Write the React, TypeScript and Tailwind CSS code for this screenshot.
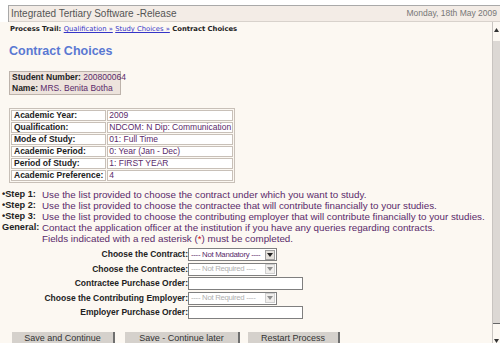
import React from "react";

const details = [
  ["Academic Year:", "2009"],
  ["Qualification:", "NDCOM: N Dip: Communication"],
  ["Mode of Study:", "01: Full Time"],
  ["Academic Period:", "0: Year (Jan - Dec)"],
  ["Period of Study:", "1: FIRST YEAR"],
  ["Academic Preference:", "4"],
];

const steps = [
  ["•Step 1:", "Use the list provided to choose the contract under which you want to study."],
  ["•Step 2:", "Use the list provided to choose the contractee that will contribute financially to your studies."],
  ["•Step 3:", "Use the list provided to choose the contributing employer that will contribute financially to your studies."],
  ["General:", "Contact the application officer at the institution if you have any queries regarding contracts."],
];

function Select({ text, disabled }: { text: string; disabled?: boolean }) {
  return (
    <div className="flex h-[13px] w-[89px] items-center border border-[#7f7f7f] bg-white">
      <span className={`flex-1 whitespace-nowrap pl-[2px] text-[7.8px] font-normal leading-none tracking-[-0.3px] ${disabled ? "text-[#b0b0b0]" : "text-[#5a2a6a]"}`}>
        {text}
      </span>
      <span className={`mr-px flex h-[10px] w-[10px] shrink-0 items-center justify-center border border-[#a0a0a0] bg-[#e4e1dc] ${disabled ? "opacity-50" : ""}`}>
        <svg width="6" height="4" viewBox="0 0 6 4">
          <polygon points="0,0 6,0 3,4" fill="#222" />
        </svg>
      </span>
    </div>
  );
}

function Input() {
  return <div className="h-[13px] w-[115px] border border-[#7f7f7f] bg-white" />;
}

export default function App() {
  return (
    <div className="relative h-[343px] w-[500px] overflow-hidden bg-white font-[family-name:'Liberation_Sans',Arial,sans-serif]">
      <div className="ml-[8px] mt-[5px] border-l border-t border-[#a9a9a9]">
        <div className="flex h-[16px] items-center justify-between border-b border-[#d8d2cc] bg-[#f3ece6] pl-[2px] pr-[3px]">
          <span className="whitespace-nowrap text-[10px] text-[#555]">Integrated Tertiary Software -Release</span>
          <span className="whitespace-nowrap text-[8.5px] text-[#777]">Monday, 18th May 2009</span>
        </div>
      </div>
      <div className="flex bg-[#fcf8f2]">
        <div className="flex-1">
          <div className="ml-[10px] mt-[2px] whitespace-nowrap font-[family-name:'DejaVu_Sans',Verdana,sans-serif] text-[6.8px] font-bold text-[#222]">
            Process Trail:{" "}
            <span className="font-normal text-[#3535c8] underline">Qualification »</span>{" "}
            <span className="font-normal text-[#3535c8] underline">Study Choices »</span> Contract Choices
          </div>
          <div className="ml-[9px] mt-[9px] text-[12.5px] font-bold leading-[16px] text-[#5a78d2]">Contract Choices</div>

          <div className="ml-[9px] mt-[12px] w-[112px] border border-[#bdb3ab] bg-[#ede3dc] px-[2px] text-[8.5px] leading-[11px] text-[#5a2a6a]">
            <div className="whitespace-nowrap">
              <span className="font-bold text-[#222]">Student Number:</span> 200800064
            </div>
            <div className="whitespace-nowrap">
              <span className="font-bold text-[#222]">Name:</span> MRS. Benita Botha
            </div>
          </div>

          <table className="ml-[9px] mt-[13px] border-separate border-spacing-[1px] border border-[#c8c0b8] text-[8.5px] leading-[9px]">
            <tbody>
              {details.map(([k, v]) => (
                <tr key={k}>
                  <td className="w-[90px] whitespace-nowrap border border-[#c8c0b8] bg-white px-[2px] font-bold text-[#222]">{k}</td>
                  <td className="w-[120px] whitespace-nowrap border border-[#c8c0b8] bg-white px-[1px] text-[#5a2a6a]">{v}</td>
                </tr>
              ))}
            </tbody>
          </table>

          <div className="ml-[2px] mt-[6px] grid grid-cols-[40px_1fr] text-[9.8px] leading-[11px] text-[#5a2a6a]">
            {steps.map(([k, v]) => (
              <React.Fragment key={k}>
                <span className="whitespace-nowrap text-[9.2px] font-bold text-[#222]">{k}</span>
                <span className="whitespace-nowrap">{v}</span>
              </React.Fragment>
            ))}
            <span />
            <span className="whitespace-nowrap">
              Fields indicated with a red asterisk (<span className="text-[#d00]">*</span>) must be completed.
            </span>
          </div>

          <div className="mt-[4px] grid grid-cols-[188px_auto] items-center gap-y-[1.5px] text-[8.5px] font-bold text-[#222]">
            <span className="whitespace-nowrap text-right">Choose the Contract:</span>
            <Select text="---- Not Mandatory ----" />
            <span className="whitespace-nowrap text-right">Choose the Contractee:</span>
            <Select text="---- Not Required ----" disabled />
            <span className="whitespace-nowrap text-right">Contractee Purchase Order:</span>
            <Input />
            <span className="whitespace-nowrap text-right">Choose the Contributing Employer:</span>
            <Select text="---- Not Required ----" disabled />
            <span className="whitespace-nowrap text-right">Employer Purchase Order:</span>
            <Input />
          </div>

          <div className="ml-[12px] mt-[13px] flex text-[9px] leading-[11px] text-[#333]">
            <div className="h-[16px] w-[103px] border-r-2 border-[#6f6f6f] bg-[#d5d1cc] pt-px text-center">Save and Continue</div>
            <div className="ml-[10px] h-[16px] w-[115px] border-r-2 border-[#6f6f6f] bg-[#d5d1cc] pt-px text-center">Save - Continue later</div>
            <div className="ml-[8px] h-[16px] w-[92px] border-r-2 border-[#6f6f6f] bg-[#d5d1cc] pt-px text-center">Restart Process</div>
          </div>
        </div>

        <div className="flex h-[322px] w-[8px] flex-col border-l border-[#c8c4c0] bg-[#fcf8f2]">
          <div className="mt-[5px] flex h-[6px] items-center justify-center">
            <svg width="5" height="4" viewBox="0 0 5 4">
              <polygon points="0,4 5,4 2.5,0" fill="#333" />
            </svg>
          </div>
          <div className="mt-[8px] h-[284px] border-b border-[#666] bg-[#dcd8d4]" />
          <div className="mt-[14px] flex h-[6px] items-center justify-center">
            <svg width="5" height="4" viewBox="0 0 5 4">
              <polygon points="0,0 5,0 2.5,4" fill="#333" />
            </svg>
          </div>
        </div>
      </div>
    </div>
  );
}
